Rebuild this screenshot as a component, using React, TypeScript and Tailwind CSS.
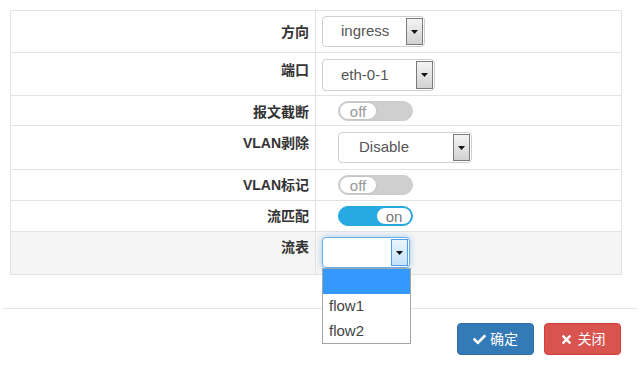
import React from "react";
import { FaCheck, FaTimes } from "react-icons/fa";

function Arrow({ focused }: { focused?: boolean }) {
  return (
    <div
      className={
        focused
          ? "my-[1px] mr-[1px] w-[17px] self-stretch border border-[#569de5] bg-gradient-to-b from-[#eaf5fd] to-[#c4e3f9] flex items-center justify-center"
          : "my-[1px] mr-[1px] w-[17px] self-stretch border border-[#7a7a7a] bg-gradient-to-b from-[#f4f4f4] to-[#d2d2d2] flex items-center justify-center"
      }
    >
      <svg width="7" height="4" viewBox="0 0 7 4">
        <polygon points="0,0 7,0 3.5,4" fill="#111" />
      </svg>
    </div>
  );
}

function Toggle({ on }: { on?: boolean }) {
  if (on) {
    return (
      <div className="flex h-[20px] w-[75px] justify-end rounded-full border border-[#27a7df] bg-[#27a9e1]">
        <div className="flex h-full w-[36px] items-center justify-center rounded-full border border-[#27a7df] bg-white text-[15px] leading-none text-[#777]">
          on
        </div>
      </div>
    );
  }
  return (
    <div className="flex h-[20px] w-[75px] justify-start rounded-full border border-[#cdcdcd] bg-[#cfcfcf]">
      <div className="flex h-full w-[38px] items-center justify-center rounded-full border border-[#c4c4c4] bg-white text-[15px] leading-none text-[#999]">
        off
      </div>
    </div>
  );
}

function Row({
  label,
  children,
  rowClass,
  labelClass,
}: {
  label: string;
  children: React.ReactNode;
  rowClass: string;
  labelClass: string;
}) {
  return (
    <div className={rowClass}>
      <div className={labelClass}>{label}</div>
      <div className="flex-1 pl-[6px]">{children}</div>
    </div>
  );
}

export default function App() {
  return (
    <div className="h-[369px] w-[640px] bg-white font-['Liberation_Sans','Noto_Sans_CJK_SC',sans-serif] text-[#333]">
      <div className="px-[10px] pt-[10px]">
        <div className="w-[612px] border border-[#e3e3e3]">
          <Row
            label="方向"
            rowClass="flex h-[42px] border-b border-[#e3e3e3]"
            labelClass="w-[305px] shrink-0 border-r border-[#e3e3e3] pr-[6px] pt-[11px] text-right text-[14px] font-bold leading-[20px]"
          >
            <div className="mt-[5px] flex h-[31px] w-[103px] items-center rounded-[4px] border border-[#cfcfcf] bg-white">
              <span className="flex-1 pl-[18px] text-[15px] text-[#555]">ingress</span>
              <Arrow />
            </div>
          </Row>
          <Row
            label="端口"
            rowClass="flex h-[43px] border-b border-[#e3e3e3]"
            labelClass="w-[305px] shrink-0 border-r border-[#e3e3e3] pr-[6px] pt-[7px] text-right text-[14px] font-bold leading-[20px]"
          >
            <div className="mt-[6px] flex h-[32px] w-[113px] items-center rounded-[4px] border border-[#cfcfcf] bg-white">
              <span className="flex-1 pl-[18px] text-[15px] text-[#555]">eth-0-1</span>
              <Arrow />
            </div>
          </Row>
          <Row
            label="报文截断"
            rowClass="flex h-[30px] border-b border-[#e3e3e3]"
            labelClass="w-[305px] shrink-0 border-r border-[#e3e3e3] pr-[6px] pt-[6px] text-right text-[14px] font-bold leading-[20px]"
          >
            <div className="ml-[16px] mt-[5px]">
              <Toggle />
            </div>
          </Row>
          <Row
            label="VLAN剥除"
            rowClass="flex h-[44px] border-b border-[#e3e3e3]"
            labelClass="w-[305px] shrink-0 border-r border-[#e3e3e3] pr-[6px] pt-[7px] text-right text-[14px] font-bold leading-[20px]"
          >
            <div className="ml-[16px] mt-[6px] flex h-[31px] w-[134px] items-center rounded-[4px] border border-[#cfcfcf] bg-white">
              <span className="flex-1 pl-[20px] text-[15px] text-[#555]">Disable</span>
              <Arrow />
            </div>
          </Row>
          <Row
            label="VLAN标记"
            rowClass="flex h-[31px] border-b border-[#e3e3e3]"
            labelClass="w-[305px] shrink-0 border-r border-[#e3e3e3] pr-[6px] pt-[5px] text-right text-[14px] font-bold leading-[20px]"
          >
            <div className="ml-[16px] mt-[5px]">
              <Toggle />
            </div>
          </Row>
          <Row
            label="流匹配"
            rowClass="flex h-[31px] border-b border-[#e3e3e3]"
            labelClass="w-[305px] shrink-0 border-r border-[#e3e3e3] pr-[6px] pt-[5px] text-right text-[14px] font-bold leading-[20px]"
          >
            <div className="ml-[16px] mt-[5px]">
              <Toggle on />
            </div>
          </Row>
          <Row
            label="流表"
            rowClass="flex h-[42px] bg-[#f5f5f5]"
            labelClass="w-[305px] shrink-0 border-r border-[#e3e3e3] pr-[6px] pt-[5px] text-right text-[14px] font-bold leading-[20px]"
          >
            <div className="relative mt-[5px] flex h-[31px] w-[88px] items-center rounded-[4px] border border-[#66afe9] bg-white shadow-[0_0_6px_rgba(102,175,233,0.6)]">
              <span className="flex-1" />
              <Arrow focused />
              <div className="absolute left-[-1px] top-[30px] z-10 w-[89px] border border-[#a5a5a5] bg-white text-[15px] text-[#444]">
                <div className="h-[25px] bg-[#3399ff]" />
                <div className="flex h-[25px] items-center pl-[6px]">flow1</div>
                <div className="flex h-[24px] items-center pl-[6px]">flow2</div>
              </div>
            </div>
          </Row>
        </div>
      </div>
      <div className="mx-[3px] mt-[33px] border-t border-[#e5e5e5]" />
      <div className="flex justify-end gap-[10px] pr-[19px] pt-[14px]">
        <button className="flex h-[32px] w-[77px] items-center justify-center gap-[4px] rounded-[4px] border border-[#2e6da4] bg-[#337ab7] text-[14px] text-white">
          <FaCheck className="h-[13px] w-[13px]" />
          <span>确定</span>
        </button>
        <button className="flex h-[32px] w-[77px] items-center justify-center gap-[5px] rounded-[4px] border border-[#d43f3a] bg-[#d9534f] text-[14px] text-white">
          <FaTimes className="h-[13px] w-[13px]" />
          <span>关闭</span>
        </button>
      </div>
    </div>
  );
}
